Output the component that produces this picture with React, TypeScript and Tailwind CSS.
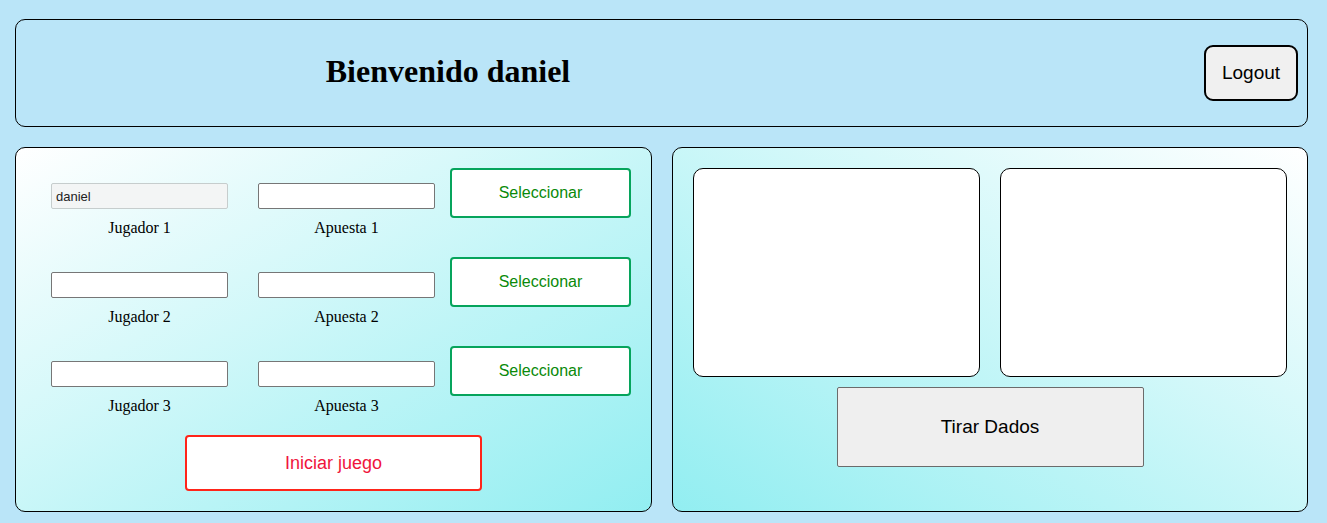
import React from 'react'

const rows = [1, 2, 3]

export default function App() {
  return (
    <div className="min-h-screen bg-[#bae5f8] pl-[15px] pr-[19px] pt-[19px] pb-[11px] font-['Liberation_Serif',serif] text-black">
      {/* Cabecera */}
      <header className="flex h-[108px] items-center rounded-[10px] border border-black">
        <div className="mb-[4px] w-[864px] text-center text-[32px] font-bold leading-none">
          Bienvenido daniel
        </div>
        <button className="ml-auto mr-[9px] h-[56px] w-[94px] rounded-[9px] border-2 border-black bg-[#f0f0f0] font-['Liberation_Sans',sans-serif] text-[19px]">
          Logout
        </button>
      </header>

      <div className="mt-[20px] flex gap-[20px]">
        {/* Panel jugadores */}
        <section className="h-[365px] w-[637px] shrink-0 rounded-[10px] border border-black bg-[linear-gradient(to_bottom_right,#ffffff,#92eef1)] pt-[20px]">
          {rows.map((n) => (
            <div key={n} className="flex h-[89px] items-start">
              <div className="ml-[35px] mt-[15px] flex w-[177px] flex-col items-center">
                {n === 1 ? (
                  <input
                    readOnly
                    value="daniel"
                    className="h-[26px] w-[177px] rounded-[2px] border border-[#c6cdcd] bg-[#f3f5f5] px-[4px] font-['Liberation_Sans',sans-serif] text-[13px] text-[#222] outline-none"
                  />
                ) : (
                  <input className="h-[26px] w-[177px] rounded-[2px] border border-[#767676] bg-white outline-none" />
                )}
                <span className="mt-[10px] text-[16px] leading-[18px]">Jugador {n}</span>
              </div>
              <div className="ml-[30px] mt-[15px] flex w-[177px] flex-col items-center">
                <input className="h-[26px] w-[177px] rounded-[2px] border border-[#767676] bg-white outline-none" />
                <span className="mt-[10px] text-[16px] leading-[18px]">Apuesta {n}</span>
              </div>
              <button className="ml-[15px] h-[50px] w-[181px] rounded-[4px] border-2 border-[#06a45c] bg-white font-['Liberation_Sans',sans-serif] text-[16px] text-[#0a8a0a]">
                Seleccionar
              </button>
            </div>
          ))}
          <div className="flex justify-center">
            <button className="h-[56px] w-[297px] rounded-[4px] border-2 border-[#ff2419] bg-white font-['Liberation_Sans',sans-serif] text-[18px] text-[#f0143c]">
              Iniciar juego
            </button>
          </div>
        </section>

        {/* Panel dados */}
        <section className="h-[365px] w-[636px] shrink-0 rounded-[10px] border border-black bg-[linear-gradient(to_top_right,#92eef1,#ffffff)] px-[20px] pt-[20px]">
          <div className="flex gap-[20px]">
            <div className="h-[209px] w-[287px] rounded-[10px] border border-black bg-white" />
            <div className="h-[209px] w-[287px] rounded-[10px] border border-black bg-white" />
          </div>
          <div className="mt-[10px] flex justify-center">
            <button className="h-[80px] w-[307px] rounded-[2px] border border-[#6b6b6b] bg-[#efefef] font-['Liberation_Sans',sans-serif] text-[19px]">
              Tirar Dados
            </button>
          </div>
        </section>
      </div>
    </div>
  )
}
